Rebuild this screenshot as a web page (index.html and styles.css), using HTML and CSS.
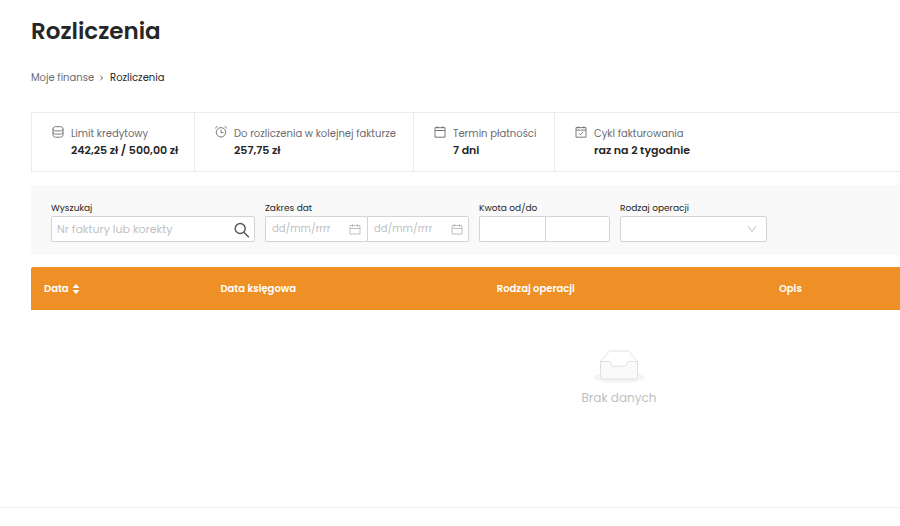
FILE: index.html
```html
<!DOCTYPE html>
<html lang="pl">
<head>
    <meta charset="UTF-8">
    <meta name="viewport" content="width=device-width, initial-scale=1.0">
    <title>Rozliczenia</title>
    <link rel="stylesheet" href="styles.css">
</head>
<body>
    <main class="page">
        <h1>Rozliczenia</h1>

        <nav class="breadcrumb">
            <a href="#">Moje finanse</a>
            <svg class="breadcrumb-arrow" viewBox="0 0 6 8"><path d="M1.5 2 3.7 4 1.5 6"/></svg>
            <span class="current">Rozliczenia</span>
        </nav>

        <section class="summary">
            <div class="summary-item">
                <svg class="icon" viewBox="0 0 12 12"><path d="M3.6.7h4.8c1.6 0 2.6.9 2.6 2.1s-1 2.1-2.6 2.1H3.6C2 4.900 1 4 1 2.800S2 .7 3.600.7zM1 2.800v6.200c0 1.300 1 2.200 2.600 2.200h4.800c1.600 0 2.600-.9 2.600-2.200V2.800M1 6c0 1.200 1 2.100 2.600 2.100h4.800C10 8.100 11 7.200 11 6"/></svg>
                <div>
                    <p>Limit kredytowy</p>
                    <strong>242,25 zł / 500,00 zł</strong>
                </div>
            </div>
            <div class="summary-item">
                <svg class="icon" viewBox="0 0 12 12"><circle cx="6" cy="6.3" r="4.7"/><path d="M6 3.600v3h2.300M.3 2.500C.5 1.500 1.300.8 2.400.6M11.700 2.500C11.500 1.500 10.700.8 9.600.6"/></svg>
                <div>
                    <p>Do rozliczenia w kolejnej fakturze</p>
                    <strong>257,75 zł</strong>
                </div>
            </div>
            <div class="summary-item">
                <svg class="icon" viewBox="0 0 12 12"><path d="M1 1.6h10v9.6H1zM1 4.5h10M3.2.3v2M8.8.3v2"/></svg>
                <div>
                    <p>Termin płatności</p>
                    <strong>7 dni</strong>
                </div>
            </div>
            <div class="summary-item">
                <svg class="icon" viewBox="0 0 12 12"><path d="M1 1.6h10v9.6H1zM1 4.1h10M3.2.3v2M8.8.3v2M4 7.3l1.5 1.5 2.7-2.9"/></svg>
                <div>
                    <p>Cykl fakturowania</p>
                    <strong>raz na 2 tygodnie</strong>
                </div>
            </div>
        </section>

        <form class="filters">
            <div class="field">
                <label for="search">Wyszukaj</label>
                <div class="control">
                    <input type="text" id="search" placeholder="Nr faktury lub korekty">
                    <button type="button" class="search-button" aria-label="Szukaj">
                        <svg viewBox="0 0 16 16"><circle cx="6.2" cy="6.5" r="5"/><path d="m9.900 10.200 5 5"/></svg>
                    </button>
                </div>
            </div>
            <div class="field">
                <label for="dateFrom">Zakres dat</label>
                <div class="pair">
                    <div class="control">
                        <input type="text" class="date" id="dateFrom" placeholder="dd/mm/rrrr">
                        <svg class="calendar" viewBox="0 0 12 12"><path d="M1 2.500h10v8.500H1zM1 5.500h10M3.500 1v3M8.500 1v3"/></svg>
                    </div>
                    <div class="control">
                        <input type="text" class="date" id="dateTo" placeholder="dd/mm/rrrr" aria-label="Data do">
                        <svg class="calendar" viewBox="0 0 12 12"><path d="M1 2.500h10v8.500H1zM1 5.500h10M3.500 1v3M8.500 1v3"/></svg>
                    </div>
                </div>
            </div>
            <div class="field">
                <label for="amountFrom">Kwota od/do</label>
                <div class="pair">
                    <div class="control"><input type="text" id="amountFrom"></div>
                    <div class="control"><input type="text" id="amountTo" aria-label="Kwota do"></div>
                </div>
            </div>
            <div class="field">
                <label for="operation">Rodzaj operacji</label>
                <div class="control">
                    <select id="operation">
                        <option value=""></option>
                    </select>
                    <svg class="chevron" viewBox="0 0 10 8"><path d="M1 1.2 5 6.5 9 1.2"/></svg>
                </div>
            </div>
        </form>

        <div class="table-wrap">
            <table>
                <thead>
                    <tr>
                        <th class="col-date">Data <svg class="sorter" viewBox="0 0 8 12"><path d="M4 1l3.5 4h-7zM4 11l3.5-4h-7z"/></svg></th>
                        <th class="col-posted">Data księgowa</th>
                        <th class="col-operation">Rodzaj operacji</th>
                        <th>Opis</th>
                    </tr>
                </thead>
                <tbody>
                    <tr>
                        <td class="empty" colspan="4">
                            <svg viewBox="0 0 64 41">
                                <ellipse cx="32" cy="33" rx="32" ry="7" fill="#f5f5f5"/>
                                <g stroke="#d9d9d9" fill="none">
                                    <path d="M55 12.76L44.854 1.258C44.367.474 43.656 0 42.907 0H21.093c-.749 0-1.46.474-1.947 1.257L9 12.761V22h46v-9.24z"/>
                                    <path d="M41.613 15.931c0-1.605.994-2.93 2.227-2.931H55v18.137C55 33.26 53.68 35 52.05 35h-40.1C10.32 35 9 33.259 9 31.137V13h11.16c1.233 0 2.227 1.323 2.227 2.928v.022c0 1.605 1.005 2.901 2.237 2.901h14.752c1.232 0 2.237-1.308 2.237-2.913v-.007z" fill="#fafafa"/>
                                </g>
                            </svg>
                            <p>Brak danych</p>
                        </td>
                    </tr>
                </tbody>
            </table>
        </div>
    </main>
    <footer></footer>
</body>
</html>
```

FILE: styles.css
```css
* {
    box-sizing: border-box;
}
body {
    margin: 0;
    font-family: Poppins, Inter, "Open Sans", sans-serif;
    font-size: 11px;
    line-height: 16px;
    color: #262626;
    background-color: #fff;
}
.page {
    padding: 16px 0 0 31px;
}
h1 {
    margin: 0 0 24px;
    font-size: 23px;
    line-height: 30px;
    font-weight: 600;
}
p {
    margin: 0;
}
.breadcrumb {
    display: flex;
    align-items: center;
    gap: 5px;
    margin-bottom: 26px;
    font-size: 10px;
}
.breadcrumb a {
    color: #6b6b70;
    text-decoration: none;
}
.breadcrumb-arrow {
    width: 6px;
    height: 8px;
    fill: none;
    stroke: #555;
}
.summary {
    display: grid;
    grid-template-columns: 163px 219px 141px 1fr;
    margin-bottom: 13px;
    border: 1px solid #ebebeb;
    border-right: none;
}
.summary-item {
    display: flex;
    gap: 7px;
    padding: 13px 0 13px 20px;
    border-right: 1px solid #ebebeb;
    white-space: nowrap;
}
.summary-item:last-child {
    border-right: none;
}
.summary-item p {
    color: #6b6b70;
    font-size: 10px;
}
.summary-item strong {
    display: block;
    font-weight: 600;
}
.icon {
    flex: none;
    width: 12px;
    height: 12px;
    fill: none;
    stroke: #6b6b70;
    stroke-width: 0.9;
}
.filters {
    display: grid;
    grid-template-columns: 204px 204px 131px 147px;
    gap: 10px;
    margin-bottom: 12px;
    padding: 15px 20px 13px;
    background-color: #f9f9f9;
}
.field label {
    display: block;
    font-size: 9px;
}
.control {
    position: relative;
    flex: 1;
}
input, select {
    display: block;
    width: 100%;
    height: 26px;
    padding: 0 5px;
    font-family: inherit;
    font-size: 11px;
    color: #262626;
    background-color: #fff;
    border: 1px solid #d4d4d4;
    border-radius: 2px;
}
select {
    appearance: none;
}
input::placeholder {
    color: #bfbfbf;
}
.date {
    padding: 0 6px;
    font-size: 10px;
}
.pair {
    display: flex;
}
.pair .control:first-child input {
    border-right: none;
    border-radius: 2px 0 0 2px;
}
.pair .control:last-child input {
    border-radius: 0 2px 2px 0;
}
.search-button {
    position: absolute;
    top: 6px;
    right: 5px;
    width: 16px;
    height: 16px;
    padding: 0;
    border: none;
    background: none;
    cursor: pointer;
}
.search-button svg {
    display: block;
    fill: none;
    stroke: #555;
    stroke-width: 1.4;
}
.calendar {
    position: absolute;
    top: 7px;
    right: 6px;
    width: 12px;
    height: 12px;
    fill: none;
    stroke: #bfbfbf;
}
.chevron {
    position: absolute;
    top: 9px;
    right: 10px;
    width: 10px;
    height: 8px;
    fill: none;
    stroke: #bfbfbf;
    pointer-events: none;
}
.table-wrap {
    overflow: hidden;
    border-radius: 2px 0 0 0;
}
table {
    width: 100%;
    min-width: 1176px;
    table-layout: fixed;
    border-collapse: collapse;
}
th {
    height: 43px;
    padding: 0 13px;
    font-size: 10px;
    font-weight: 600;
    text-align: left;
    color: #fff;
    background-color: #ee9025;
}
.col-date {
    width: 15%;
}
.col-posted {
    width: 23.5%;
}
.col-operation {
    width: 24%;
}
.sorter {
    width: 8px;
    height: 12px;
    margin-left: 1px;
    vertical-align: middle;
    fill: #fff;
}
.empty {
    padding: 41px 0 101px;
    text-align: center;
    font-size: 12px;
    color: #bfbfbf;
}
.empty svg {
    display: block;
    width: 52px;
    height: 33px;
    margin: 0 auto 6px;
    overflow: visible;
}
footer {
    height: 18px;
    border-top: 1px solid #f0f0f0;
}
```
